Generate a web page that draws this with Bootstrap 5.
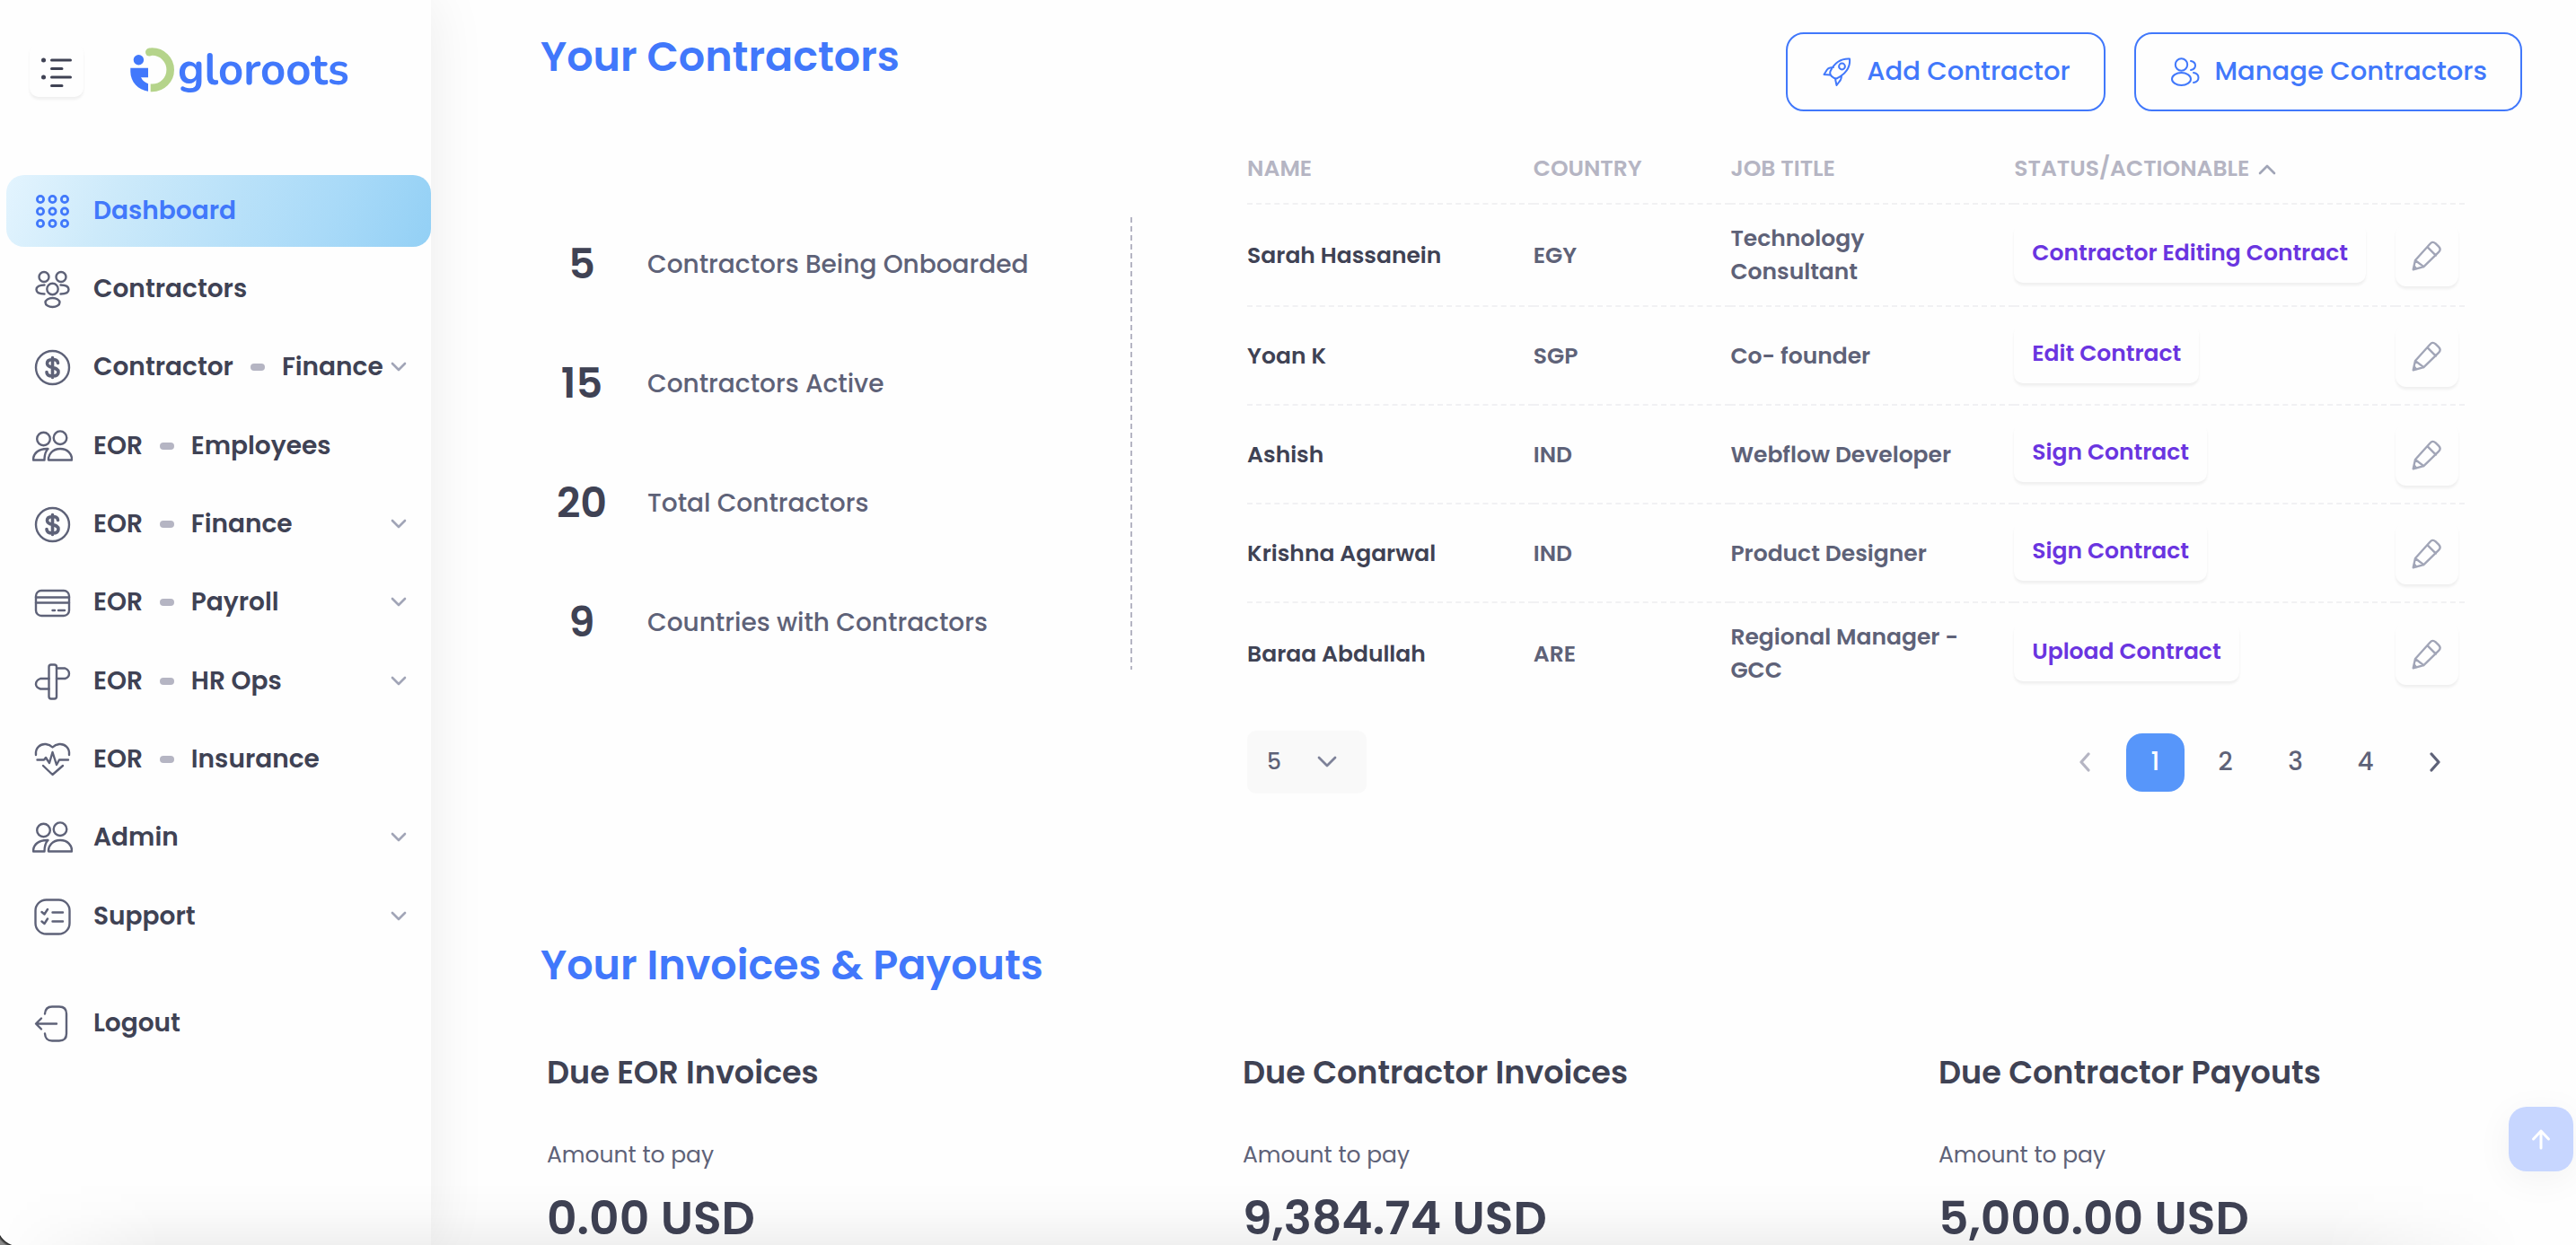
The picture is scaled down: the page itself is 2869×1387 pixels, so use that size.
<!DOCTYPE html>
<html lang="en">
<head>
<meta charset="utf-8">
<meta name="viewport" content="width=device-width, initial-scale=1">
<title>Gloroots Dashboard</title>
<link href="https://cdn.jsdelivr.net/npm/bootstrap@5.3.0/dist/css/bootstrap.min.css" rel="stylesheet">
<style>
:root{--ink:#3f4254;--muted:#5e6278;--soft:#b5b5c3;--brand:#4178fb;--violet:#6a35e0}
body{font-family:Poppins,Inter,"Liberation Sans",sans-serif;background:#fefefe;color:var(--ink);height:100vh;overflow:hidden}
svg{fill:none;stroke:currentColor;stroke-linecap:round;stroke-linejoin:round;flex:none}
.side{width:480px;height:100vh;background:#fefefe;box-shadow:0 0 60px rgba(0,0,0,.08);z-index:2;flex:none}
.side-head{padding:48px 33px 0;height:195px}
.toggle,.tag-btn,.edit-btn{background:#fefefe;border:0;box-shadow:0 3px 3px rgba(0,0,0,.06)}
.toggle{width:60px;height:60px;border-radius:10px;color:var(--ink)}
.brand-link{margin-left:52px;gap:3px;color:var(--brand);font:700 49px/60px Nunito,Lato,sans-serif}
.side-nav li{margin:0 0 7px 7px}
.side-nav li:nth-child(3n){margin-bottom:8px}
.side-nav li:last-child{margin-top:39px}
.side-nav a{height:80px;border-radius:20px;padding:0 27px 0 29px;font-size:28px;font-weight:600;color:var(--ink);text-decoration:none}
.side-nav a>svg:first-child{color:var(--muted);stroke-width:2.4;margin-right:23px}
.side-nav a.active{background:linear-gradient(112deg,#e3f4fe 0,#cdeafa 25%,#a9daf8 75%,#93d0f5 100%)}
.side-nav a.active,.side-nav a.active>svg:first-child{color:var(--brand)}
.side-nav .chev{color:#a1a5b7;stroke-width:2.6}
.crumb{gap:19px}
.pill{width:16px;height:8px;border-radius:4px;background:var(--soft)}
.head-row{padding:36px 60px 0 122px}
.title{font-size:46px;line-height:54px;font-weight:600;color:var(--brand)}
.btn-line{--bs-btn-color:var(--brand);--bs-btn-border-color:var(--brand);--bs-btn-hover-bg:var(--brand);--bs-btn-hover-color:#fff;height:88px;padding:0 37px 0 39px;gap:17px;border-width:2px;border-radius:20px;font-size:29px;font-weight:500}
.body-row{padding:24px 124px 0 123px}
.stats-col{flex:0 0 36.7%;padding:94px 128px 0 0}
.stats{gap:28px;background:repeating-linear-gradient(var(--soft) 0 6px,transparent 6px 10px) right/2px 100% no-repeat}
.stat{height:105px}
.stat b{width:90px;font-size:46px;font-weight:600;text-align:center}
.stat span{margin-left:28px;font-size:28px;font-weight:500;color:var(--muted)}
.grid-table{font-size:25px;font-weight:600;line-height:37px;table-layout:fixed;color:var(--muted)}
.grid-table th,.grid-table td{padding:19px 0;vertical-align:middle;border-bottom:2px dashed #f1f1f3}
.grid-table thead th{height:79px;color:var(--soft);font-weight:600;padding:0;white-space:nowrap}
.grid-table thead svg{color:#a1a5b7}
.grid-table tbody th{color:var(--ink);font-weight:600}
.grid-table tbody tr:last-child>*{border-bottom:0}
.grid-table td:nth-child(3){padding-right:56px}
.tag-btn{height:66px;margin-bottom:4px;padding:0 20px 2px;border-radius:10px;color:var(--violet);font-weight:600;display:block}
.edit-btn{width:70px;height:70px;border-radius:12px;color:#a1a5b7;display:block}
.edit-btn svg{stroke-width:2.6}
.pager-row{margin-top:30px}
.size-box{width:133px}
.size-box select{height:70px;border:0;border-radius:10px;background:#f9f9f9;color:var(--muted);font-size:25px;font-weight:500;padding:0 22px;appearance:none}
.size-box svg{right:33px;top:24px;color:#7e8299;pointer-events:none}
.pages{gap:14px}
.pages .page-link{width:65px;height:65px;border:0;border-radius:18px;padding:0;font-size:28px;font-weight:500;color:var(--muted);background:none}
.pages .active .page-link{background:#5796fa;color:#fff}
.pages .disabled .page-link{color:var(--soft)}
.title-2{margin:164px 0 0 122px}
.due-grid{display:grid;grid-template-columns:repeat(3,1fr);gap:125px;padding:69px 60px 0 129px}
.due-grid h3{font-size:35px;line-height:48px;font-weight:600;margin:0 0 50px}
.due-grid p{font-size:25px;line-height:36px;color:var(--muted);margin:0 0 24px}
.due-grid strong{display:block;font-size:52px;line-height:56px;font-weight:600;white-space:nowrap}
.to-top{right:3px;bottom:82px;width:72px;height:72px;border:0;border-radius:20px;background:#c7d6ff;color:#fff;box-shadow:0 8px 40px rgba(0,0,0,.05);z-index:4}
.fade-foot{left:0;right:0;bottom:0;height:70px;z-index:3;pointer-events:none;background:linear-gradient(transparent,rgba(0,0,0,.015) 50%,rgba(0,0,0,.055));-webkit-mask:linear-gradient(90deg,transparent,#000 180px calc(100% - 280px),transparent calc(100% - 60px))}
.corner{left:0;bottom:0;width:20px;height:20px;z-index:5;background:radial-gradient(circle at 22px -4px,transparent 25px,#222 26px,#8a8a8a 29px)}
</style>
</head>
<body class="d-flex">
<svg class="d-none">
<symbol id="i-grid" viewBox="0 0 45 45"><g stroke-width="2.800"><circle cx="9" cy="9" r="3.600"/><circle cx="22.500" cy="9" r="3.600"/><circle cx="36" cy="9" r="3.600"/><circle cx="9" cy="22.500" r="3.600"/><circle cx="22.500" cy="22.500" r="3.600"/><circle cx="36" cy="22.500" r="3.600"/><circle cx="9" cy="36" r="3.600"/><circle cx="22.500" cy="36" r="3.600"/><circle cx="36" cy="36" r="3.600"/></g></symbol>
<symbol id="i-team" viewBox="0 0 45 45"><circle cx="13" cy="8.500" r="5.500"/><circle cx="32" cy="8.500" r="5.500"/><circle cx="22.500" cy="22" r="6.200"/><ellipse cx="22.500" cy="37" rx="8" ry="5"/><path d="M13.500 17.500C8 17.500 4.500 19.500 4.500 22.500s3.500 5 9 5M31.500 17.500c5.500 0 9 2 9 5s-3.500 5-9 5"/></symbol>
<symbol id="i-coin" viewBox="0 0 45 45"><circle cx="22.500" cy="22.500" r="18.500"/><path stroke-width="3.600" d="M28.500 17.500c0-3-2.500-4-6-4s-6 1-6 4.300c0 3 2.500 3.900 6 4.700s6.500 1.500 6.500 5-3 4.500-6.500 4.500-6.500-1-6.500-4.500M22.500 11.500v22"/></symbol>
<symbol id="i-users" viewBox="0 0 45 45"><circle cx="12.500" cy="14" r="7.300"/><circle cx="31" cy="12.700" r="7.300"/><path d="M18 37.500c-.5-6 4.500-12.500 13-12.500s13.500 6 13 12.500zM17.500 25C7 24.500 1 30 1 37.500h12.500C13.500 32 14.500 28 17.500 25z"/></symbol>
<symbol id="i-card" viewBox="0 0 45 45"><rect x="4" y="9" width="37" height="28" rx="6"/><path d="M4 16.500h37M4 22.500h37M22.500 31h2.500M29 31h7"/></symbol>
<symbol id="i-sign" viewBox="0 0 45 45"><rect x="18.500" y="3.500" width="8.500" height="38" rx="2.500"/><path d="M27 7.500h9.500q4.500 2 4.500 6t-4.500 5.500H27M18.500 19H9q-5 2-5 6t5 5.500h9.500"/></symbol>
<symbol id="i-heart" viewBox="0 0 45 45"><path d="M4 17C3 9 9 4.500 15 5q4.500.5 7.500 3.500Q25.500 5.500 30 5C36 4.500 42 9 41 17M5.500 22.500H13l2-2.500 4 6 3.500-12 4.500 14 3-5.500h10M12 29l10.500 10L34 29"/></symbol>
<symbol id="i-list" viewBox="0 0 45 45"><rect x="3.500" y="3.500" width="38" height="38" rx="12"/><path d="M22.500 17.500H34M22.500 27.500H34M10.500 17l3 2.500 3.500-5.500M10.500 27.500l3 2.500 3.500-5.500"/></symbol>
<symbol id="i-exit" viewBox="0 0 45 45"><path d="M14 11.500q.5-8 8-8h8q8 0 8 8v22q0 8-8 8h-8q-7.500 0-8-8M27 22.500H4.500M10 16.500l-6 6 6 6"/></symbol>
<symbol id="i-down" viewBox="0 0 18 12"><path d="M2 2l7 7 7-7"/></symbol>
<symbol id="i-pencil" viewBox="0 0 40 40"><path d="M3 37l2.500-11.500L24 5q3-3.500 6.500-.5l4 4q3.500 3.500 0 7L16 33.500zM5.500 25.500l10.500 8M20.500 9l10.500 10.500M4 32.500l3 3.500"/></symbol>
</svg>

<aside class="side position-relative">
  <div class="side-head d-flex align-items-start">
    <button class="toggle p-0" type="button" aria-label="Toggle menu">
      <svg width="40" height="40" viewBox="0 0 40 40" stroke-width="3"><path d="M14.500 9h21M14.500 18.500h11.500M14.500 28h21M14.500 37.500h11.500" /><path stroke-width="5" d="M5.500 9h.01M5.500 28h.01"/></svg>
    </button>
    <a href="#" class="brand-link d-flex align-items-center text-decoration-none">
      <svg width="50" height="50" viewBox="0 0 50 50"><g stroke="none"><circle cx="9.400" cy="13.700" r="5.700" fill="#4178fb"/><path fill="#4178fb" d="M.3 22.700H20V33.300H12Q14.500 38.500 20 40.200V48.700C9 47.500.3 38 .3 27z"/><circle cx="21.300" cy="5.100" r="4.300" fill="#b5d48b"/></g><path d="M21.500 5.100Q23 4.500 24.500 4.500A20.200 20.200 0 0 1 24.500 44.900H22.700" stroke="#b5d48b" stroke-width="8.600" stroke-linecap="butt"/></svg>
      <span>gloroots</span>
    </a>
  </div>
  <nav>
    <ul class="side-nav list-unstyled m-0">
      <li><a class="active d-flex align-items-center" href="#"><svg width="45" height="45"><use href="#i-grid"/></svg>Dashboard</a></li>
      <li><a class="d-flex align-items-center" href="#"><svg width="45" height="45"><use href="#i-team"/></svg>Contractors</a></li>
      <li><a class="d-flex align-items-center" href="#"><svg width="45" height="45"><use href="#i-coin"/></svg><span class="crumb d-flex align-items-center">Contractor<i class="pill"></i>Finance</span><svg class="chev ms-auto" width="18" height="12"><use href="#i-down"/></svg></a></li>
      <li><a class="d-flex align-items-center" href="#"><svg width="45" height="45"><use href="#i-users"/></svg><span class="crumb d-flex align-items-center">EOR<i class="pill"></i>Employees</span></a></li>
      <li><a class="d-flex align-items-center" href="#"><svg width="45" height="45"><use href="#i-coin"/></svg><span class="crumb d-flex align-items-center">EOR<i class="pill"></i>Finance</span><svg class="chev ms-auto" width="18" height="12"><use href="#i-down"/></svg></a></li>
      <li><a class="d-flex align-items-center" href="#"><svg width="45" height="45"><use href="#i-card"/></svg><span class="crumb d-flex align-items-center">EOR<i class="pill"></i>Payroll</span><svg class="chev ms-auto" width="18" height="12"><use href="#i-down"/></svg></a></li>
      <li><a class="d-flex align-items-center" href="#"><svg width="45" height="45"><use href="#i-sign"/></svg><span class="crumb d-flex align-items-center">EOR<i class="pill"></i>HR Ops</span><svg class="chev ms-auto" width="18" height="12"><use href="#i-down"/></svg></a></li>
      <li><a class="d-flex align-items-center" href="#"><svg width="45" height="45"><use href="#i-heart"/></svg><span class="crumb d-flex align-items-center">EOR<i class="pill"></i>Insurance</span></a></li>
      <li><a class="d-flex align-items-center" href="#"><svg width="45" height="45"><use href="#i-users"/></svg>Admin<svg class="chev ms-auto" width="18" height="12"><use href="#i-down"/></svg></a></li>
      <li><a class="d-flex align-items-center" href="#"><svg width="45" height="45"><use href="#i-list"/></svg>Support<svg class="chev ms-auto" width="18" height="12"><use href="#i-down"/></svg></a></li>
      <li><a class="d-flex align-items-center" href="#"><svg width="45" height="45"><use href="#i-exit"/></svg>Logout</a></li>
    </ul>
  </nav>
</aside>

<main class="flex-grow-1">
  <section>
    <div class="head-row d-flex justify-content-between align-items-start">
      <h1 class="title m-0">Your Contractors</h1>
      <div class="d-flex gap-4">
        <button type="button" class="btn btn-line d-flex align-items-center me-2">
          <svg width="32" height="32" viewBox="0 0 32 32" stroke-width="2"><path d="M30 1.500C20 1 13 6 8.500 15.500q-1 3 1.500 5.500t5.500 2.500C25.500 18.500 31 11 30 1.500zM12 11Q7 11 5 13.500L1.500 19l6.500.5M21 20q0 4.500-2.500 7L15.500 31 14 24"/><circle cx="21.500" cy="10" r="3.400"/></svg>
          Add Contractor</button>
        <button type="button" class="btn btn-line d-flex align-items-center">
          <svg width="32" height="32" viewBox="0 0 32 32" stroke-width="2"><circle cx="11.500" cy="8" r="6.700"/><ellipse cx="11.500" cy="24" rx="10.500" ry="7"/><path d="M22 4q5 1 5 5t-5 5M25 17q5.500 1 5.500 5.500T25 28"/></svg>
          Manage Contractors</button>
      </div>
    </div>
    <div class="body-row d-flex align-items-start">
      <div class="stats-col">
        <div class="stats d-flex flex-column">
          <div class="stat d-flex align-items-center"><b>5</b><span>Contractors Being Onboarded</span></div>
          <div class="stat d-flex align-items-center"><b>15</b><span>Contractors Active</span></div>
          <div class="stat d-flex align-items-center"><b>20</b><span>Total Contractors</span></div>
          <div class="stat d-flex align-items-center"><b>9</b><span>Countries with Contractors</span></div>
        </div>
      </div>
      <div class="flex-grow-1">
        <table class="grid-table w-100">
          <colgroup><col style="width:23.5%"><col style="width:16.2%"><col style="width:23.3%"><col><col style="width:77px"></colgroup>
          <thead><tr><th>NAME</th><th>COUNTRY</th><th>JOB TITLE</th><th>STATUS/ACTIONABLE <svg class="ms-1" width="20" height="14" viewBox="0 0 20 14" stroke-width="2.600"><path d="M2 11l8-8 8 8"/></svg></th><th></th></tr></thead>
          <tbody>
            <tr><th>Sarah Hassanein</th><td>EGY</td><td>Technology Consultant</td><td><button type="button" class="tag-btn">Contractor Editing Contract</button></td><td><button type="button" class="edit-btn p-0" aria-label="Edit"><svg width="36" height="36"><use href="#i-pencil"/></svg></button></td></tr>
            <tr><th>Yoan K</th><td>SGP</td><td>Co- founder</td><td><button type="button" class="tag-btn">Edit Contract</button></td><td><button type="button" class="edit-btn p-0" aria-label="Edit"><svg width="36" height="36"><use href="#i-pencil"/></svg></button></td></tr>
            <tr><th>Ashish</th><td>IND</td><td>Webflow Developer</td><td><button type="button" class="tag-btn">Sign Contract</button></td><td><button type="button" class="edit-btn p-0" aria-label="Edit"><svg width="36" height="36"><use href="#i-pencil"/></svg></button></td></tr>
            <tr><th>Krishna Agarwal</th><td>IND</td><td>Product Designer</td><td><button type="button" class="tag-btn">Sign Contract</button></td><td><button type="button" class="edit-btn p-0" aria-label="Edit"><svg width="36" height="36"><use href="#i-pencil"/></svg></button></td></tr>
            <tr><th>Baraa Abdullah</th><td>ARE</td><td>Regional Manager - GCC</td><td><button type="button" class="tag-btn">Upload Contract</button></td><td><button type="button" class="edit-btn p-0" aria-label="Edit"><svg width="36" height="36"><use href="#i-pencil"/></svg></button></td></tr>
          </tbody>
        </table>
        <div class="pager-row d-flex justify-content-between align-items-center">
          <div class="size-box position-relative">
            <select class="w-100" aria-label="Rows per page"><option>5</option><option>10</option></select>
            <svg class="position-absolute" width="22" height="22" viewBox="0 0 22 22" stroke-width="2.800"><path d="M2 6l9 9 9-9"/></svg>
          </div>
          <ul class="pagination pages m-0">
            <li class="page-item disabled"><a class="page-link d-flex align-items-center justify-content-center" href="#" aria-label="Previous"><svg width="14" height="22" viewBox="0 0 14 22" stroke-width="3.200"><path d="M11 2L3 11l8 9"/></svg></a></li>
            <li class="page-item active"><a class="page-link d-flex align-items-center justify-content-center" href="#">1</a></li>
            <li class="page-item"><a class="page-link d-flex align-items-center justify-content-center" href="#">2</a></li>
            <li class="page-item"><a class="page-link d-flex align-items-center justify-content-center" href="#">3</a></li>
            <li class="page-item"><a class="page-link d-flex align-items-center justify-content-center" href="#">4</a></li>
            <li class="page-item"><a class="page-link d-flex align-items-center justify-content-center" href="#" aria-label="Next"><svg width="14" height="22" viewBox="0 0 14 22" stroke-width="3.200"><path d="M3 2l8 9-8 9"/></svg></a></li>
          </ul>
        </div>
      </div>
    </div>
  </section>
  <section>
    <h2 class="title title-2">Your Invoices &amp; Payouts</h2>
    <div class="due-grid">
      <div><h3>Due EOR Invoices</h3><p>Amount to pay</p><strong>0.00 USD</strong></div>
      <div><h3>Due Contractor Invoices</h3><p>Amount to pay</p><strong>9,384.74 USD</strong></div>
      <div><h3>Due Contractor Payouts</h3><p>Amount to pay</p><strong>5,000.00 USD</strong></div>
    </div>
  </section>
</main>
<button type="button" class="to-top position-fixed p-0" aria-label="Back to top"><svg width="24" height="24" viewBox="0 0 24 24" stroke-width="3"><path d="M12 22V3M3.500 12L12 3l8.500 9"/></svg></button>
<div class="fade-foot position-fixed"></div>
<div class="corner position-fixed"></div>
<script src="https://cdn.jsdelivr.net/npm/bootstrap@5.3.0/dist/js/bootstrap.bundle.min.js"></script>
</body>
</html>
